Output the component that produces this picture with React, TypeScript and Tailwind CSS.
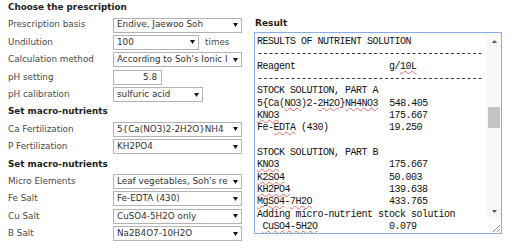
import React from 'react';

const Caret = () => (
  <svg width="5" height="4" viewBox="0 0 5 4" className="shrink-0">
    <path d="M0 0 H5 L2.5 4 Z" fill="#111" />
  </svg>
);

const Select = ({ value, width = 'w-[129px]' }: { value: string; width?: string }) => (
  <div className={`${width} h-[15px] flex items-center border border-[#b3b3b3] bg-white pl-[3px] pr-[3px] gap-[3px]`}>
    <span className="flex-1 overflow-hidden whitespace-nowrap text-[#333]">{value}</span>
    <Caret />
  </div>
);

const Row = ({ label, children }: { label: string; children: React.ReactNode }) => (
  <div className="h-[17.4px] flex items-center">
    <div className="w-[105px] text-[#4a4a4a]">{label}</div>
    {children}
  </div>
);

const Heading = ({ text }: { text: string }) => (
  <div className="h-[17.4px] flex items-center font-bold text-[#1e1e1e]">{text}</div>
);

// red squiggle the spellchecker draws under unknown words
const W = ({ children }: { children: React.ReactNode }) => (
  <span className="underline decoration-wavy decoration-[#ec6a6a] decoration-[0.5px] underline-offset-[1px]">{children}</span>
);

const dashes = '-'.repeat(41);
const pad = (n: number) => ' '.repeat(24 - n);

const lines: React.ReactNode[] = [
  'RESULTS OF NUTRIENT SOLUTION',
  dashes,
  <>Reagent{pad(7)}g/<W>10L</W></>,
  dashes,
  'STOCK SOLUTION, PART A',
  <>5{'{'}Ca(<W>NO3</W>)2-<W>2H2O</W>{'}'}<W>NH4NO3</W>{pad(22)}548.405</>,
  <><W>KNO3</W>{pad(4)}175.667</>,
  <>Fe-<W>EDTA</W> (430){pad(13)}19.250</>,
  '',
  'STOCK SOLUTION, PART B',
  <><W>KNO3</W>{pad(4)}175.667</>,
  <><W>K2SO4</W>{pad(5)}50.003</>,
  <><W>KH2PO4</W>{pad(6)}139.638</>,
  <><W>MgSO4</W>-<W>7H2O</W>{pad(10)}433.765</>,
  'Adding micro-nutrient stock solution',
  <> <W>CuSO4-5H2O</W>{pad(11)}0.079</>,
];

const Scrollbar = () => (
  <div className="w-[14px] flex flex-col bg-[#f8f8f8]">
    <div className="h-[16px] flex items-center justify-center">
      <svg width="5" height="3" viewBox="0 0 5 3"><path d="M0 3 L2.5 0 L5 3 Z" fill="#555" /></svg>
    </div>
    <div className="flex-1">
      <div className="mt-[58px] mx-[1px] h-[21px] bg-[#c4c4c4]" />
    </div>
    <div className="h-[16px] flex items-center justify-center">
      <svg width="5" height="3" viewBox="0 0 5 3"><path d="M0 0 L5 0 L2.5 3 Z" fill="#555" /></svg>
    </div>
    <div className="h-[14px] flex items-end justify-end bg-white">
      <svg width="12" height="12" viewBox="0 0 12 12">
        <path d="M11 4 L4 11 M11 8 L8 11" stroke="#9a9a9a" strokeWidth="1" />
      </svg>
    </div>
  </div>
);

export default function App() {
  return (
    <div className="w-[512px] h-[250px] bg-white flex overflow-hidden text-[8.8px]" style={{ fontFamily: '"DejaVu Sans", Verdana, sans-serif' }}>
      <div className="w-[254px] pl-[8px] -mt-[1px]">
        <Heading text="Choose the prescription" />
        <Row label="Prescription basis"><Select value="Endive, Jaewoo Soh" /></Row>
        <Row label="Undilution">
          <Select value="100" width="w-[86px]" />
          <span className="ml-[6px] text-[#4a4a4a]">times</span>
        </Row>
        <Row label="Calculation method"><Select value="According to Soh's Ionic I" /></Row>
        <Row label="pH setting">
          <div className="w-[49px] h-[15px] border border-[#b3b3b3] bg-white text-right pr-[4px] leading-[13px] text-[#333]">5.8</div>
        </Row>
        <Row label="pH calibration"><Select value="sulfuric acid" width="w-[90px]" /></Row>
        <Heading text="Set macro-nutrients" />
        <Row label="Ca Fertilization"><Select value="5{Ca(NO3)2-2H2O}NH4" /></Row>
        <Row label="P Fertilization"><Select value="KH2PO4" /></Row>
        <Heading text="Set macro-nutrients" />
        <Row label="Micro Elements"><Select value="Leaf vegetables, Soh's re" /></Row>
        <Row label="Fe Salt"><Select value="Fe-EDTA (430)" /></Row>
        <Row label="Cu Salt"><Select value="CuSO4-5H2O only" /></Row>
        <Row label="B Salt"><Select value="Na2B4O7-10H2O" /></Row>
      </div>

      <div className="w-[248px] pt-[17px]">
        <div className="h-[15px] pl-[1px] font-bold text-[#2a1a10] text-[9px]">Result</div>
        <div className="h-[202px] flex border border-[#86aee0] bg-white">
          <div
            className="flex-1 overflow-hidden whitespace-pre pl-[2px] pt-[3px] text-[10px] leading-[12.35px] tracking-[-0.5px] text-[#111]"
            style={{ fontFamily: '"Liberation Mono", "DejaVu Sans Mono", monospace' }}
          >
            {lines.map((l, i) => (
              <div key={i} className="h-[12.35px]">{l}</div>
            ))}
          </div>
          <Scrollbar />
        </div>
      </div>
    </div>
  );
}
